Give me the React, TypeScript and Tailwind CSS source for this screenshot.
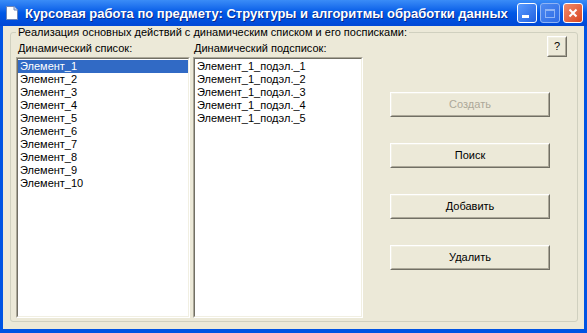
import React from "react";

const main = ["Элемент_1", "Элемент_2", "Элемент_3", "Элемент_4", "Элемент_5", "Элемент_6", "Элемент_7", "Элемент_8", "Элемент_9", "Элемент_10"];
const sub = [1, 2, 3, 4, 5].map((n) => `Элемент_1_подэл._${n}`);

const Sunken: React.FC<{ className?: string; children?: React.ReactNode }> = ({ className, children }) => (
  <div className={`border border-t-[#ACA899] border-l-[#ACA899] border-r-white border-b-white ${className ?? ""}`}>
    <div className="h-full border border-t-[#716F64] border-l-[#716F64] border-r-[#F1EFE2] border-b-[#F1EFE2] bg-white pt-[1px]">
      {children}
    </div>
  </div>
);

const Btn: React.FC<{ label: string; disabled?: boolean; className?: string }> = ({ label, disabled, className }) => (
  <div className={`border border-t-white border-l-white border-r-[#716F64] border-b-[#716F64] ${className ?? ""}`}>
    <div
      className={`h-full flex items-center justify-center border border-t-[#F1EFE2] border-l-[#F1EFE2] border-r-[#ACA899] border-b-[#ACA899] bg-[#ECE9D8] text-[11px] ${
        disabled ? "text-[#ACA899]" : "text-black"
      }`}
    >
      {label}
    </div>
  </div>
);

export default function App() {
  return (
    <div
      className="w-[587px] h-[333px] flex flex-col bg-[#0054E3] overflow-hidden"
      style={{ fontFamily: '"Liberation Sans", Arial, sans-serif' }}
    >
      {/* title bar */}
      <div className="h-[26px] flex items-center pl-[6px] pr-[4px] bg-gradient-to-b from-[#3A8CF7] via-[#0058E6] to-[#0048D6]">
        <svg width="12" height="14" viewBox="0 0 12 14" className="shrink-0">
          <path d="M0.5 0.5 H8 L11.5 4 V13.5 H0.5 Z" fill="#ffffff" stroke="#6E86B8" />
          <path d="M8 0.5 V4 H11.5" fill="#C8D6F0" stroke="#6E86B8" />
        </svg>
        <div className="ml-[7px] text-[13px] font-bold text-white leading-none [text-shadow:1px_1px_0_#0A2A8A] whitespace-nowrap">
          Курсовая работа по предмету: Структуры и алгоритмы обработки данных
        </div>
        <div className="ml-auto flex gap-[3px]">
          <div className="w-[20px] h-[20px] rounded-[3px] border border-white bg-gradient-to-br from-[#5A9BFF] to-[#2160E0] relative">
            <div className="absolute left-[4px] bottom-[4px] w-[7px] h-[3px] bg-white" />
          </div>
          <div className="w-[20px] h-[20px] rounded-[3px] border border-[#8FB4F5] bg-gradient-to-br from-[#4E8AF0] to-[#2E6BE6] flex items-center justify-center">
            <div className="w-[10px] h-[9px] border border-[#8FB4F5] border-t-2" />
          </div>
          <div className="w-[20px] h-[20px] rounded-[3px] border border-white bg-gradient-to-br from-[#F08A6A] to-[#D8441C] flex items-center justify-center">
            <svg width="10" height="10" viewBox="0 0 10 10">
              <path d="M1.5 1.5 L8.5 8.5 M8.5 1.5 L1.5 8.5" stroke="#ffffff" strokeWidth="2" />
            </svg>
          </div>
        </div>
      </div>

      {/* client area */}
      <div className="flex-1 mx-[3px] mb-[4px] bg-[#ECE9D8] pl-[7px] pr-[6px] pt-[6px] pb-[7px] flex text-[11px] text-black">
        <div className="relative flex-1 flex border border-[#D0D0BF] rounded-[3px]">
          <div className="absolute left-[5px] -top-[7px] px-[2px] bg-[#ECE9D8] leading-[13px] whitespace-nowrap">
            Реализация основных действий с динамическим списком и его посписками:
          </div>

          <div className="w-[174px] ml-[5px] pt-[9px] pb-[3px] flex flex-col">
            <div className="h-[13px] leading-[13px] pl-[2px]">Динамический список:</div>
            <Sunken className="mt-[2px] flex-1">
              {main.map((t, i) => (
                <div
                  key={t}
                  className={`h-[13px] leading-[11px] pl-[1px] border border-transparent ${
                    i === 0 ? "bg-[#316AC5] text-white border-dotted border-[#E8D48A]" : ""
                  }`}
                >
                  {t}
                </div>
              ))}
            </Sunken>
          </div>

          <div className="w-[170px] ml-[3px] pt-[9px] pb-[3px] flex flex-col">
            <div className="h-[13px] leading-[13px] pl-[1px]">Динамический подсписок:</div>
            <Sunken className="mt-[2px] flex-1">
              {sub.map((t) => (
                <div key={t} className="h-[13px] leading-[13px] pl-[2px]">
                  {t}
                </div>
              ))}
            </Sunken>
          </div>

          <div className="flex-1 flex flex-col pt-[3px] pr-[10px]">
            <Btn label="?" className="self-end w-[20px] h-[21px]" />
            <div className="ml-[27px] mt-[35px] flex flex-col gap-[26px]">
              <Btn label="Создать" disabled className="w-[160px] h-[25px]" />
              <Btn label="Поиск" className="w-[160px] h-[25px]" />
              <Btn label="Добавить" className="w-[160px] h-[25px]" />
              <Btn label="Удалить" className="w-[160px] h-[25px]" />
            </div>
          </div>
        </div>
      </div>
    </div>
  );
}
